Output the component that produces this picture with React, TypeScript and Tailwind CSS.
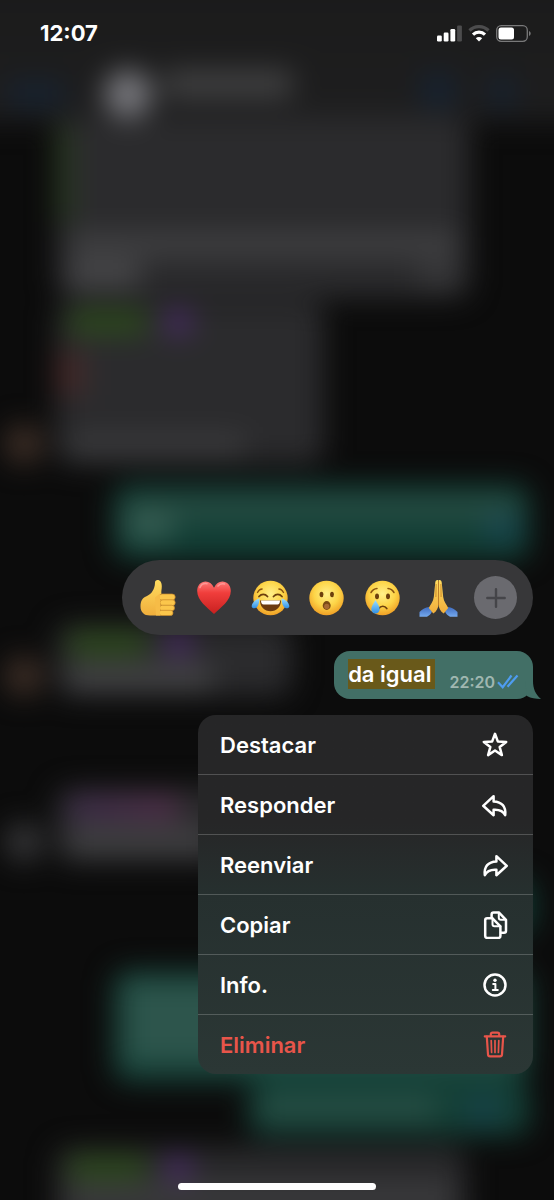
import type { ReactNode } from 'react';

const stroke = {
  width: 28,
  height: 28,
  viewBox: '0 0 28 28',
  fill: 'none',
  stroke: 'currentColor',
  strokeWidth: 2.5,
  strokeLinecap: 'round',
  strokeLinejoin: 'round',
  'aria-hidden': true,
} as const;

const actions: { label: string; danger?: boolean; icon: ReactNode }[] = [
  {
    label: 'Destacar',
    icon: (
      <svg {...stroke}>
        <path d="M14 2.8l2.9 7.8 8.3.3-6.5 5.2 2.2 8L14 19.5l-6.9 4.6 2.2-8-6.5-5.2 8.3-.3z" />
      </svg>
    ),
  },
  {
    label: 'Responder',
    icon: (
      <svg {...stroke}>
        <path d="M12.6 5.2 2.2 14.8 12.6 24.2v-5.4c6.2-.4 9.6 1.2 11.6 5.4 1-8.600-3.400-13.600-11.600-13.800z" />
      </svg>
    ),
  },
  {
    label: 'Reenviar',
    icon: (
      <svg {...stroke}>
        <path d="M15.4 5.2 25.8 14.8 15.4 24.2v-5.4C9.2 18.4 5.8 20 3.8 24.2c-1-8.6 3.4-13.6 11.6-13.8z" />
      </svg>
    ),
  },
  {
    label: 'Copiar',
    icon: (
      <svg {...stroke}>
        <path d="M11.5 7.3H6.200a2 2 0 0 0-2 2v15.600a2 2 0 0 0 2 2h11.200a2 2 0 0 0 2-2v-9.600z" />
        <path d="M11.5 7.3v6a2 2 0 0 0 2 2h5.9" strokeWidth="2" />
        <path d="M10.600 6.500V3.400a2 2 0 0 1 2-2h5.200l7.200 7.400v11a2 2 0 0 1-2 2h-3" />
        <path d="M17.800 1.800v5a2 2 0 0 0 2 2h4.600" strokeWidth="2" />
      </svg>
    ),
  },
  {
    label: 'Info.',
    icon: (
      <svg {...stroke}>
        <circle cx="14" cy="14" r="10.5" />
        <circle cx="14" cy="9.200" r="1.700" fill="currentColor" stroke="none" />
        <path d="M12.200 12.900h2.200v6M11.800 19.100h5" strokeWidth="2" />
      </svg>
    ),
  },
  {
    label: 'Eliminar',
    danger: true,
    icon: (
      <svg {...stroke} strokeWidth={2.2}>
        <path d="M3.8 5.4h20.4M9.8 5V3.2a1.6 1.6 0 0 1 1.6-1.6h5.2a1.6 1.6 0 0 1 1.6 1.6V5" />
        <path d="m5.8 5.6 1.2 17.8a2 2 0 0 0 2 1.9h10a2 2 0 0 0 2-1.9l1.2-17.8" />
        <path d="m10.2 9.500.4 12M14 9.500v12M17.800 9.500l-.4 12" strokeWidth="1.700" />
      </svg>
    ),
  },
];

function Emoji({ children }: { children: ReactNode }) {
  return (
    <svg width="40" height="40" viewBox="0 0 40 40" aria-hidden="true">
      {children}
    </svg>
  );
}

function EmojiDefs() {
  return (
    <svg width="0" height="0" className="absolute" aria-hidden="true">
      <defs>
        <radialGradient id="face" cx="50%" cy="38%" r="65%">
          <stop offset="0" stopColor="#fff08a" />
          <stop offset=".55" stopColor="#fdd548" />
          <stop offset="1" stopColor="#ee9a22" />
        </radialGradient>
        <linearGradient id="skin" x1="0" y1="0" x2="0" y2="1">
          <stop offset="0" stopColor="#ffdc5f" />
          <stop offset="1" stopColor="#f0ae3c" />
        </linearGradient>
        <linearGradient id="heart" x1="0" y1="0" x2="0" y2="1">
          <stop offset="0" stopColor="#ff7a78" />
          <stop offset=".35" stopColor="#f03e3c" />
          <stop offset="1" stopColor="#c8201f" />
        </linearGradient>
        <linearGradient id="tear" x1="0" y1="0" x2="0" y2="1">
          <stop offset="0" stopColor="#9fe0ff" />
          <stop offset="1" stopColor="#2f8fe6" />
        </linearGradient>
        <linearGradient id="sleeve" x1="0" y1="0" x2="0" y2="1">
          <stop offset="0" stopColor="#3f6cc0" />
          <stop offset="1" stopColor="#75a9ee" />
        </linearGradient>
      </defs>
    </svg>
  );
}

const reactions = [
  {
    name: 'Me gusta',
    icon: (
      <Emoji>
        <path d="M19.500 2c2.800 0 4.300 2.700 4.300 6.200 0 3-.8 5.400-.4 7.300l-1 22H12c-6 0-9.500-3.400-9.500-9 0-6 2-9 6.500-10.600C13.500 16 16.800 11.500 17 4.800 17 3 18 2 19.500 2z" fill="url(#skin)" />
        <g fill="#fbc64b" stroke="#c98a2b" strokeWidth=".7">
          <rect x="21" y="16" width="16.200" height="6.200" rx="3.100" />
          <rect x="22" y="21.800" width="15.200" height="5.800" rx="2.900" />
          <rect x="21.500" y="27.200" width="15" height="5.600" rx="2.800" />
          <rect x="21" y="32.300" width="14" height="5.200" rx="2.600" />
        </g>
        <path d="M22 15.500v22h-4l-1-18z" fill="#f6bc47" />
      </Emoji>
    ),
  },
  {
    name: 'Me encanta',
    icon: (
      <Emoji>
        <path d="M20 9.700C18 5.500 15 3.500 11.700 3.500 7 3.500 3.200 7.100 3.200 13c0 9.500 10 16.500 16.800 23 6.800-6.500 16.800-13.500 16.800-23C36.800 7.100 33 3.500 28.300 3.500 25 3.500 22 5.500 20 9.700z" fill="url(#heart)" />
        <path d="M6 9.500c1.200-3 4-4.300 7-3.800M24 8c1.500-2 4-2.700 6.500-2" stroke="#ffaaa6" strokeWidth="1.600" fill="none" strokeLinecap="round" opacity=".7" />
      </Emoji>
    ),
  },
  {
    name: 'Me divierte',
    icon: (
      <Emoji>
        <circle cx="20.500" cy="20" r="17.200" fill="url(#face)" />
        <path d="M7.500 14.500c1.500-2.800 3-3.400 4.600-3.500M33.500 14.500c-1.500-2.800-3-3.400-4.600-3.500" stroke="#8a5411" strokeWidth="1.400" fill="none" strokeLinecap="round" />
        <path d="M9 18.500c2.500-2.800 6-2.800 8.500 0M23.500 18.500c2.500-2.800 6-2.800 8.500 0" stroke="#6d400d" strokeWidth="1.800" fill="none" strokeLinecap="round" />
        <path d="M10 22.500h21c0 6.500-4.500 10.800-10.500 10.800S10 29 10 22.500z" fill="#6b3a10" />
        <path d="M11 22.500h19c0 2.800-1 4-2.500 4h-14c-1.500 0-2.500-1.200-2.500-4z" fill="#fff" />
        <path d="M9.500 20.500c-4 1-7.500 4-7.800 7.500-.2 2.500 3.800 3.200 5.500.8 1.600-2.300 2.300-5.300 2.300-8.300zM31.500 20.500c4 1 7.500 4 7.800 7.500.2 2.500-3.800 3.200-5.500.8-1.600-2.300-2.300-5.300-2.300-8.300z" fill="url(#tear)" />
      </Emoji>
    ),
  },
  {
    name: 'Me asombra',
    icon: (
      <Emoji>
        <circle cx="20.500" cy="20" r="17.200" fill="url(#face)" />
        <ellipse cx="15.500" cy="16.500" rx="1.900" ry="2.800" fill="#6d400d" />
        <ellipse cx="26" cy="16.500" rx="1.900" ry="2.800" fill="#6d400d" />
        <ellipse cx="20.700" cy="27.500" rx="4" ry="4.400" fill="#7a4a14" />
        <ellipse cx="20.700" cy="28.500" rx="2.600" ry="2.800" fill="#a76a33" />
      </Emoji>
    ),
  },
  {
    name: 'Me entristece',
    icon: (
      <Emoji>
        <circle cx="20.500" cy="20" r="17.200" fill="url(#face)" />
        <path d="M9 14.500c1.400-2.400 3.400-3.800 6-4M32 14.500c-1.400-2.400-3.400-3.800-6-4" stroke="#8a5411" strokeWidth="1.500" fill="none" strokeLinecap="round" />
        <ellipse cx="15" cy="18.300" rx="2" ry="2.900" fill="#6d400d" />
        <ellipse cx="26" cy="18.300" rx="2" ry="2.900" fill="#6d400d" />
        <path d="M16.800 30.500c2-3 6-3 8 0" stroke="#6d400d" strokeWidth="1.700" fill="none" strokeLinecap="round" />
        <path d="M13.500 22c2.200 4 4.200 6.500 4.200 9.300a4.200 4.200 0 0 1-8.400 0c0-2.800 2-5.300 4.200-9.300z" fill="url(#tear)" />
      </Emoji>
    ),
  },
  {
    name: 'Gracias',
    icon: (
      <Emoji>
        <path d="M1.500 34c3-3 6-4.500 9.500-5l3 4.500c-1 2.500-3 4.300-5 5.200H1.500zM39.500 34c-3-3-6-4.500-9.500-5l-3 4.500c1 2.500 3 4.300 5 5.200h7.500z" fill="url(#sleeve)" />
        <path d="M20.300 2.200c-1.500-.5-2.700.3-3 2L15.800 19c-.5 4.500-3.500 7.500-5 11l4.500 5.500c3.300-2.200 5.200-5.500 5.200-10z" fill="url(#skin)" />
        <path d="M20.700 2.200c1.500-.5 2.700.3 3 2L25.200 19c.5 4.500 3.500 7.500 5 11l-4.500 5.500c-3.300-2.200-5.200-5.500-5.200-10z" fill="url(#skin)" />
        <path d="M20.500 3v24M18.100 6l-.2 13M22.900 6l.2 13" stroke="#c07a22" strokeWidth=".8" fill="none" />
      </Emoji>
    ),
  },
];

function StatusBar() {
  return (
    <header className="flex items-center justify-between pt-5 pr-[23px] pl-10 text-white">
      <time className="text-[22px] leading-[26px] font-bold">12:07</time>
      <div className="flex items-center gap-1.5">
        <svg width="25" height="17" viewBox="0 0 25 17" fill="#fff" aria-label="Cobertura">
          <rect y="10.500" width="4.800" height="6" rx="1.200" />
          <rect x="6.700" y="7.500" width="4.800" height="9" rx="1.200" />
          <rect x="13.400" y="4" width="4.800" height="12.500" rx="1.200" />
          <rect x="20.100" y=".500" width="4.800" height="16" rx="1.200" fill="#4c4c4d" />
        </svg>
        <svg width="22" height="17" viewBox="0 0 22 17" fill="none" strokeWidth="3.200" aria-label="Wi-Fi">
          <path d="M1.500 5.500a13.500 13.500 0 0 1 19 0" stroke="#4c4c4d" />
          <path d="M5 9.600a8.600 8.600 0 0 1 12 0" stroke="#fff" />
          <path d="M11 16.500 7.800 13.200a4.600 4.600 0 0 1 6.400 0z" fill="#fff" />
        </svg>
        <svg width="35" height="17" viewBox="0 0 35 17" aria-label="Batería">
          <rect x=".700" y=".700" width="30.600" height="15.600" rx="4.500" fill="none" stroke="#79797a" strokeWidth="1.300" />
          <rect x="2.500" y="2.500" width="15.500" height="12" rx="2.500" fill="#fff" />
          <path d="M33 6v5c1-.4 1.700-1.300 1.700-2.500S34 6.400 33 6z" fill="#79797a" />
        </svg>
      </div>
    </header>
  );
}

interface ReceivedProps {
  name?: string;
  badge?: boolean;
  avatar?: string;
  className: string;
  children?: ReactNode;
}

function Received({ name, badge, avatar = '', className, children }: ReceivedProps) {
  return (
    <div className="flex items-end">
      <div className={`mr-3 ml-1 h-10 w-10 shrink-0 rounded-full ${avatar}`} />
      <div className={`flex flex-col rounded-2xl bg-[#2b2b2d] px-3 py-2 ${className}`}>
        {name && (
          <div className="flex gap-4">
            <div className={`h-6 rounded-lg ${name}`} />
            {badge && <div className="h-6 w-7 rounded-lg bg-[#4a2b68]" />}
          </div>
        )}
        {children}
      </div>
    </div>
  );
}

// Out of focus conversation behind the context menu
function ChatBackdrop() {
  return (
    <div className="absolute inset-0 overflow-hidden" aria-hidden="true">
      <div className="-mx-10 -mt-10 flex flex-col blur-[14px]">
        <div className="flex h-[162px] shrink-0 items-end bg-linear-to-b from-[#1a1a1a] to-[#1e1e1f] px-10">
          <div className="mb-4 ml-2 h-6 w-14 bg-[#162231]" />
          <div className="mb-1 ml-10 h-12 w-12 rounded-full bg-[#77777c]" />
          <div className="mb-6 ml-3 h-7 w-32 bg-[#414142]" />
          <div className="mr-9 mb-4 ml-auto h-8 w-8 bg-[#152232]" />
          <div className="mr-10 mb-4 h-7 w-6 bg-[#152232]" />
        </div>
        <div className="flex flex-col px-10">
          <Received className="-mt-1 h-[180px] w-[414px] justify-between">
            <div className="-ml-3 h-24 w-4 bg-[#2a3c22]" />
            <div className="flex flex-col gap-2 pb-1">
              <div className="h-5 w-full bg-[#434345]" />
              <div className="flex justify-between">
                <div className="h-6 w-18 bg-[#4a4a4c]" />
                <div className="h-6 w-10 bg-[#39393b]" />
              </div>
            </div>
          </Received>
          <div className="mt-1">
            <Received name="bg-[#2c4a1c] w-20" badge avatar="bg-[#3d2e26]" className="h-[162px] w-[268px] justify-between">
              <div className="mb-6 -ml-3 h-11 w-7 bg-[#452a2a]" />
              <div className="h-5 w-44 bg-[#3d3d3f]" />
            </Received>
          </div>
          <div className="mt-5 mr-6 h-[76px] w-[417px] self-end rounded-2xl bg-[#133f36] px-3 py-4">
            <div className="h-4 w-full bg-[#2f5248]" />
            <div className="flex justify-between">
              <div className="h-6 w-12 bg-[#345c52]" />
              <div className="h-6 w-8 bg-[#164450]" />
            </div>
          </div>
          <div className="mt-16">
            <Received name="bg-[#2c4a1c] w-20" badge avatar="bg-[#3d2e26]" className="h-[72px] w-[236px] justify-between">
              <div className="h-5 w-36 bg-[#4a4a4c]" />
            </Received>
          </div>
          <div className="mt-[92px]">
            <Received name="bg-linear-to-r from-[#3e2d4c] to-[#55304c] w-28" avatar="bg-[#343436]" className="h-[74px] w-[268px] justify-between">
              <div className="h-6 w-36 bg-[#434345]" />
            </Received>
          </div>
          <div className="mt-4 mr-5 h-14 w-48 self-end rounded-2xl bg-[#123d35]" />
          <div className="mt-9 mr-6 h-[112px] w-[417px] self-end rounded-2xl bg-[#164239] p-3">
            <div className="h-20 w-full bg-[#2d554c]" />
          </div>
          <div className="mr-6 flex h-[54px] w-[282px] self-end rounded-2xl bg-[#143f36] px-3 py-4">
            <div className="h-5 w-44 bg-[#2b5147]" />
            <div className="ml-8 h-6 w-8 bg-[#17424b]" />
          </div>
          <div className="mt-3">
            <Received name="bg-[#2c4a1c] w-20" badge className="h-[110px] w-[410px]">
              <div className="mt-2 h-5 w-full bg-[#404042]" />
            </Received>
          </div>
        </div>
      </div>
    </div>
  );
}

function SelectedMessage() {
  return (
    <div className="relative flex h-12 items-end rounded-[16px] bg-[#426f66] px-3.5 pb-1.5 text-white">
      <p className="mb-1">
        <mark className="block bg-[#69591a] pr-1 text-[22px] leading-[30px] font-semibold text-white">da igual</mark>
      </p>
      <time className="ml-3.5 text-[16px] leading-[22px] font-semibold text-[#a0b7b1]">22:20</time>
      <svg width="22" height="15" viewBox="0 0 22 15" className="mb-1 ml-0.5 shrink-0" fill="none" stroke="#4e9cf0" strokeWidth="2.200" aria-label="Leído">
        <path d="M1 8.300l4.700 4.900L14.500 1.500M10.500 12.800 20.500 1.500" />
      </svg>
      <svg width="22" height="18" viewBox="0 0 22 18" className="absolute -right-2 bottom-0" fill="#426f66" aria-hidden="true">
        <path d="M6 0h8c0 7.500 2.500 13.500 8 18-5.500 0-10-.8-14-3z" />
      </svg>
    </div>
  );
}

export default function App() {
  return (
    <main className="relative flex min-h-screen flex-col overflow-hidden bg-[#0c0c0c] font-[Inter,'Liberation_Sans',sans-serif]">
      <ChatBackdrop />
      <EmojiDefs />
      <div className="relative flex flex-1 flex-col">
        <StatusBar />
        <div className="mt-auto mr-[21px] flex flex-col items-end gap-4">
          <div className="flex h-[75px] items-center gap-4 rounded-full bg-[#373739] px-4">
            {reactions.map((r) => (
              <button key={r.name} type="button" aria-label={r.name}>
                {r.icon}
              </button>
            ))}
            <button type="button" aria-label="Más reacciones" className="flex h-[43px] w-[43px] items-center justify-center rounded-full bg-[#6a6a6f]">
              <svg width="20" height="20" viewBox="0 0 20 20" stroke="#454549" strokeWidth="2.400" strokeLinecap="round">
                <path d="M10 1.300v17.400M1.300 10h17.400" />
              </svg>
            </button>
          </div>
          <SelectedMessage />
          <ul className="w-[335px] divide-y divide-white/20 overflow-hidden rounded-[18px] bg-linear-to-b from-[#262627] from-30% via-[#26302f] via-50% to-[#2b3735]">
            {actions.map((a) => (
              <li key={a.label}>
                <button
                  type="button"
                  className={`flex h-[59px] w-full items-center justify-between pr-6 pl-[22px] text-[22px] leading-7 font-semibold ${a.danger ? 'text-[#e8554a]' : 'text-white'}`}
                >
                  {a.label}
                  {a.icon}
                </button>
              </li>
            ))}
          </ul>
        </div>
        <div className="mt-[109px] mb-2.5 h-[7px] w-[198px] self-center rounded-full bg-white" />
      </div>
    </main>
  );
}
